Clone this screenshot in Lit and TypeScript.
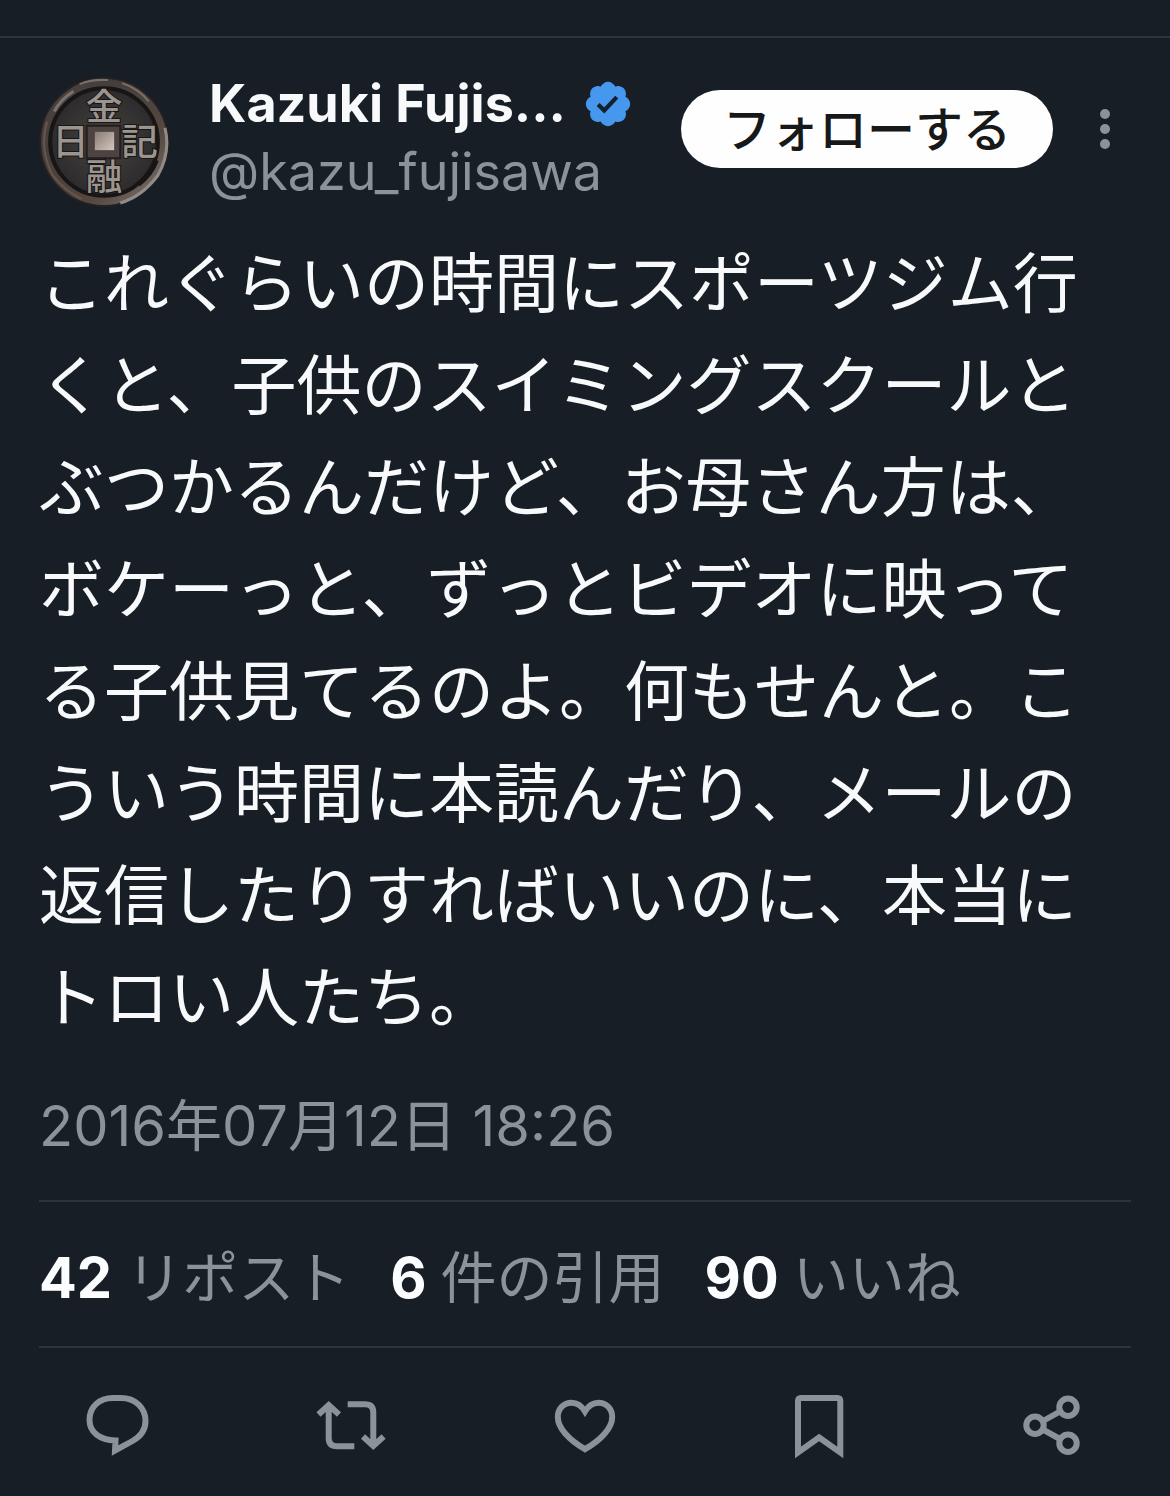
import { LitElement, html, css, svg } from "lit";
import { customElement } from "lit/decorators.js";

const badgePath =
  "M20.396 11c-.018-.646-.215-1.275-.57-1.816-.354-.54-.852-.972-1.438-1.246.223-.607.27-1.264.14-1.897-.131-.634-.437-1.218-.882-1.687-.47-.445-1.053-.75-1.687-.882-.633-.13-1.29-.083-1.897.14-.273-.587-.704-1.086-1.245-1.44S11.647 1.62 11 1.604c-.646.017-1.273.213-1.813.568s-.969.854-1.24 1.44c-.608-.223-1.267-.272-1.902-.14-.635.13-1.22.436-1.69.882-.445.47-.749 1.055-.878 1.688-.13.633-.08 1.29.144 1.896-.587.274-1.087.705-1.443 1.245-.356.54-.555 1.17-.574 1.817.02.647.218 1.276.574 1.817.356.54.856.972 1.443 1.245-.224.606-.274 1.263-.144 1.896.13.634.433 1.218.877 1.688.47.443 1.054.747 1.687.878.633.132 1.29.084 1.897-.136.274.586.705 1.084 1.246 1.439.54.354 1.17.551 1.816.569.647-.016 1.276-.213 1.817-.567s.972-.854 1.245-1.44c.604.239 1.266.296 1.903.164.636-.132 1.22-.447 1.68-.907.46-.46.776-1.044.908-1.681s.075-1.299-.165-1.903c.586-.274 1.084-.705 1.439-1.246.354-.54.551-1.17.569-1.816z";

const actions = [
  {
    label: "返信",
    icon: svg`<path d="M32 8H40C54.500 8 64.500 18 64.500 31C64.500 40 59.500 46.500 51.500 51L34 60.500L34.500 50.500C18.500 50 8.500 42 8.500 30C8.500 17 18 8 32 8Z"/>`,
  },
  {
    label: "リポスト",
    icon: svg`<path d="M3.500 24.500L13.700 15L24 24.500M13.700 15V48Q13.700 56.300 22 56.300H39.300M32.700 14.300H50Q58.300 14.300 58.300 22.500V56M48 46.500L58.300 56L68.600 46.500"/>`,
  },
  {
    label: "いいね",
    icon: svg`<path d="M36 21.500C31.500 14 26.500 12.800 22.500 12.800C15 12.800 8.800 18.500 8.800 27C8.800 38 20 50 36 59.200C52 50 63.200 38 63.200 27C63.200 18.500 57 12.800 49.500 12.800C45.500 12.800 40.500 14 36 21.500Z"/>`,
  },
  {
    label: "ブックマーク",
    icon: svg`<path d="M15 62.500V11Q15 8 18 8H54.300Q57.300 8 57.300 11V62.500L36.100 47.500Z"/>`,
  },
  {
    label: "共有",
    icon: svg`<circle cx="18" cy="35.300" r="8.700"/><circle cx="51" cy="17.300" r="8.700"/><circle cx="51" cy="53.300" r="8.700"/><path d="M26 31L43 21.500M26 39.600L43 49"/>`,
  },
];

const stats = [
  { count: 42, label: "リポスト" },
  { count: 6, label: "件の引用" },
  { count: 90, label: "いいね" },
];

@customElement("coin-avatar")
class CoinAvatar extends LitElement {
  static styles = css`
    :host {
      display: block;
      flex: none;
    }
    .coin {
      display: block;
      width: 130px;
      height: 132px;
    }
    .glyph {
      font-family: "Noto Sans CJK JP", sans-serif;
      font-weight: 500;
      font-size: 36px;
      text-anchor: middle;
      fill: #9c948f;
      stroke: #171515;
      stroke-width: 2;
      paint-order: stroke;
    }
  `;

  render() {
    return html`<svg class="coin" viewBox="2 2 128 128" role="img" aria-label="Kazuki Fujisawa">
      <defs>
        <linearGradient id="rim" x1="0" y1="0" x2="1" y2="1">
          <stop offset="0" stop-color="#48413f" />
          <stop offset=".3" stop-color="#463e3b" />
          <stop offset=".7" stop-color="#54483f" />
          <stop offset="1" stop-color="#7d7672" />
        </linearGradient>
        <radialGradient id="field">
          <stop offset="0" stop-color="#474241" />
          <stop offset="1" stop-color="#2d2b2c" />
        </radialGradient>
        <linearGradient id="hole" x1="0" y1="0" x2="1" y2="1">
          <stop offset="0" stop-color="#8a7b73" />
          <stop offset="1" stop-color="#d3c8c0" />
        </linearGradient>
      </defs>
      <circle cx="66" cy="66" r="64" fill="#252121" />
      <circle cx="66" cy="66" r="58" fill="none" stroke="url(#rim)" stroke-width="8" />
      <path d="M42 9Q54 4 70 5M84 8Q101 14 110 26" fill="none" stroke="#77706d" stroke-width="2" />
      <path d="M126 52Q132 76 119 99Q103 120 82 126" fill="none" stroke="#918b88" stroke-width="3" />
      <path d="M10 46Q2 72 15 98Q26 113 44 122" fill="none" stroke="#66564e" stroke-width="2" />
      <path d="M17 36Q23 24 36 16" fill="none" stroke="#7b716d" stroke-width="3" />
      <circle cx="66" cy="66" r="53" fill="url(#field)" stroke="#171515" stroke-width="4" />
      <path d="M100 108Q113 98 118 84" fill="none" stroke="#171515" stroke-width="4" />
      <text class="glyph" x="66" y="44">金</text>
      <text class="glyph" x="33" y="79">日</text>
      <text class="glyph" x="101" y="79">記</text>
      <text class="glyph" x="66" y="113">融</text>
      <rect x="49" y="50" width="33" height="32" fill="#4d4340" stroke="#231f1f" stroke-width="2" />
      <rect x="57" y="56" width="19" height="18" fill="url(#hole)" />
    </svg>`;
  }
}

@customElement("app-root")
class AppRoot extends LitElement {
  static styles = css`
    :host {
      display: block;
      min-height: 100vh;
      background: #171e25;
      color: #f7f9fa;
      font-family: Inter, "Noto Sans CJK JP", sans-serif;
    }
    .post {
      margin: 0;
      padding-top: 36px;
    }
    .content {
      border-top: 2px solid #2d353c;
      padding: 38px 39px 0;
    }
    .header {
      display: flex;
      align-items: flex-start;
    }
    .author {
      flex: 1;
      min-width: 0;
      padding: 0 40px;
      color: inherit;
      text-decoration: none;
    }
    .name-row {
      display: flex;
      align-items: center;
      gap: 16px;
      height: 56px;
    }
    .name {
      font-size: 52px;
      line-height: 56px;
      font-weight: 700;
      white-space: nowrap;
    }
    .badge {
      flex: none;
      width: 52px;
      height: 52px;
    }
    .handle {
      display: block;
      margin-top: 8px;
      font-size: 52px;
      line-height: 64px;
      color: #8b939a;
    }
    .follow {
      flex: none;
      margin-top: 14px;
      height: 78px;
      padding: 0 42px 6px;
      border: 0;
      border-radius: 39px;
      background: #fefefe;
      color: #16181a;
      font-family: "Noto Sans CJK JP", sans-serif;
      font-size: 48px;
      font-weight: 500;
      line-height: 72px;
      white-space: nowrap;
    }
    .more {
      flex: none;
      display: grid;
      place-items: center;
      width: 52px;
      height: 78px;
      margin: 14px 0 0 26px;
      padding: 0;
      border: 0;
      background: none;
    }
    .dots {
      width: 12px;
      height: 44px;
      fill: #8b939a;
    }
    .text {
      margin: 20px 0 0;
      font-family: "Noto Sans CJK JP", sans-serif;
      font-size: 65px;
      line-height: 102px;
    }
    .date {
      display: block;
      margin-top: 44px;
      font-size: 56px;
      line-height: 76px;
      color: #8b939a;
      text-decoration: none;
    }
    .stats {
      display: flex;
      flex-wrap: wrap;
      gap: 0 40px;
      margin: 36px 0 0;
      padding: 36px 0 28px;
      border-top: 2px solid #2d353c;
      border-bottom: 2px solid #2d353c;
      list-style: none;
    }
    .stat {
      display: flex;
      align-items: baseline;
      gap: 14px;
      font-size: 56px;
      line-height: 80px;
      color: #8b939a;
    }
    .count {
      font-weight: 700;
      color: #fcfdfe;
    }
    .actions {
      display: grid;
      grid-template-columns: repeat(5, 1fr);
      justify-items: center;
      padding: 42px 0 32px;
    }
    .action {
      display: block;
      padding: 0;
      border: 0;
      background: none;
    }
    .icon {
      display: block;
      width: 72px;
      height: 72px;
      fill: none;
      stroke: #8b939a;
      stroke-width: 6;
    }
  `;

  render() {
    return html`<article class="post">
      <div class="content">
        <header class="header">
          <coin-avatar></coin-avatar>
          <a class="author" href="#profile">
            <span class="name-row">
              <span class="name">Kazuki Fujis...</span>
              <svg class="badge" viewBox="0 0 22 22" aria-hidden="true">
                <path d=${badgePath} fill="#4697ee" />
                <path d="M6.800 11.200L9.400 13.700L14.700 8.100" fill="none" stroke="#14202c" stroke-width="1.800" />
              </svg>
            </span>
            <span class="handle">@kazu_fujisawa</span>
          </a>
          <button class="follow" type="button">フォローする</button>
          <button class="more" type="button" aria-label="もっと見る">
            <svg class="dots" viewBox="0 0 12 44">
              <circle cx="6" cy="7" r="5" />
              <circle cx="6" cy="22" r="5" />
              <circle cx="6" cy="37" r="5" />
            </svg>
          </button>
        </header>
        <p class="text">これぐらいの時間にスポーツジム行くと、子供のスイミングスクールとぶつかるんだけど、お母さん方は、ボケーっと、ずっとビデオに映ってる子供見てるのよ。何もせんと。こういう時間に本読んだり、メールの返信したりすればいいのに、本当にトロい人たち。</p>
        <a class="date" href="#status">2016年07月12日 18:26</a>
        <ul class="stats">
          ${stats.map(
            (s) => html`<li class="stat"><span class="count">${s.count}</span><span>${s.label}</span></li>`
          )}
        </ul>
      </div>
      <nav class="actions">
        ${actions.map(
          (a) => html`<button class="action" type="button" aria-label=${a.label}>
            <svg class="icon" viewBox="0 0 72 72">${a.icon}</svg>
          </button>`
        )}
      </nav>
    </article>`;
  }
}
